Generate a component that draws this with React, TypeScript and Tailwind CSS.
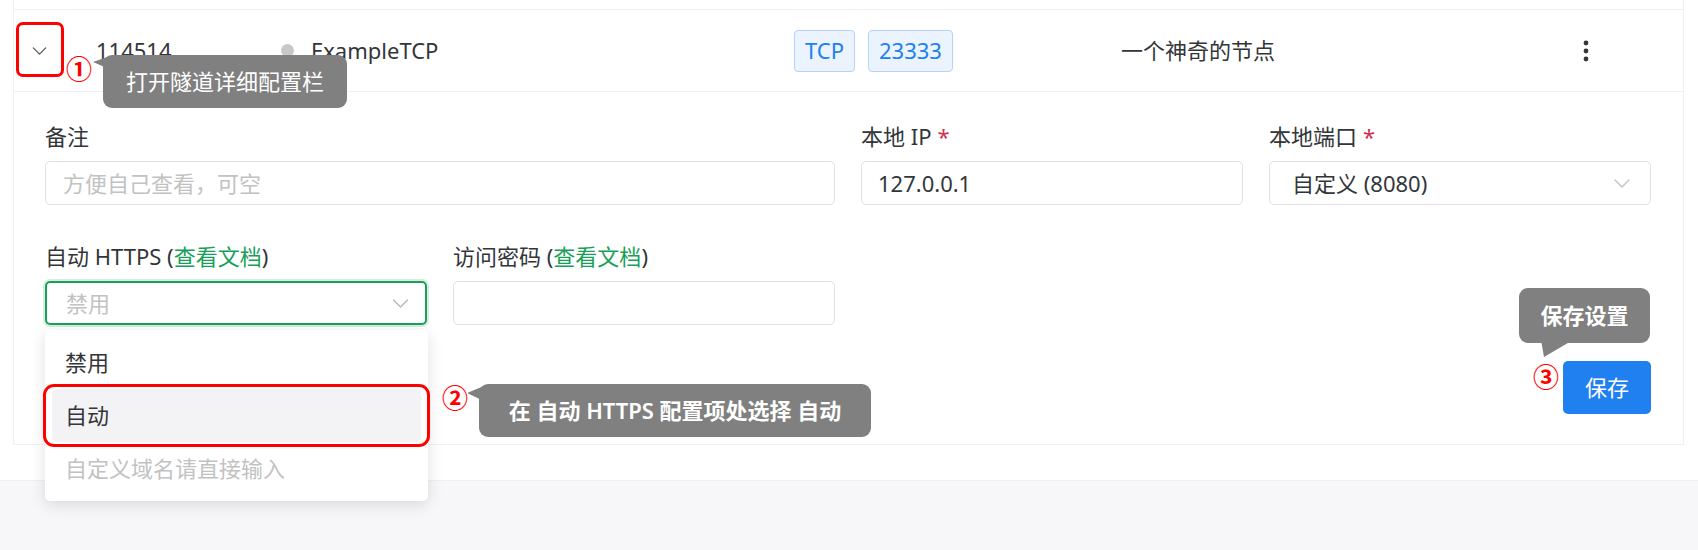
import React from "react";

const Chevron = ({ className = "" }: { className?: string }) => (
  <svg
    viewBox="0 0 16 9"
    className={className}
    fill="none"
    stroke="currentColor"
    strokeWidth={1.4}
    strokeLinecap="round"
    strokeLinejoin="round"
  >
    <path d="M1 1l7 7 7-7" />
  </svg>
);

const Label = ({ children }: { children: React.ReactNode }) => (
  <div className="h-[30px] leading-[30px] mb-[10px] text-[22px] text-[#333639] whitespace-nowrap">{children}</div>
);

const Star = () => <span className="ml-[6px] text-[#d03050]">*</span>;

const Doc = () => (
  <span>
    {" "}(<span className="text-[#18a058]">查看文档</span>)
  </span>
);

const Tag = ({ children }: { children: React.ReactNode }) => (
  <span className="h-[42px] px-[10px] flex items-center rounded-[4px] border border-[#b5d3f9] bg-[#eaf3fe] text-[#2080f0] text-[22px]">
    {children}
  </span>
);

export default function App() {
  return (
    <div className="relative w-[1698px] h-[550px] overflow-hidden bg-white font-['Noto_Sans','Noto_Sans_CJK_SC',sans-serif] text-[#333639]">
      {/* card */}
      <div className="ml-[13px] w-[1671px] border-x border-b border-[#efeff5]">
        <div className="h-[10px] border-b border-[#efeff5]" />

        {/* tunnel row */}
        <div className="h-[82px] flex items-center border-b border-[#efeff5] text-[22px]">
          <div className="w-[82px] flex">
            <button className="w-[50px] h-[50px] flex items-center justify-center text-[#555]">
              <Chevron className="w-[15px] h-[8px]" />
            </button>
          </div>
          <div className="w-[185px]">114514</div>
          <div className="w-[513px] flex items-center">
            <span className="w-[13px] h-[13px] rounded-full bg-[#c8c8c8]" />
            <span className="ml-[17px]">ExampleTCP</span>
          </div>
          <div className="w-[327px] flex items-center gap-[13px]">
            <Tag>TCP</Tag>
            <Tag>23333</Tag>
          </div>
          <div className="w-[455px]">一个神奇的节点</div>
          <div className="w-[20px] flex justify-center">
            <svg viewBox="0 0 6 22" className="w-[6px] h-[22px] fill-[#333639]">
              <circle cx="3" cy="3" r="2.4" />
              <circle cx="3" cy="11" r="2.4" />
              <circle cx="3" cy="19" r="2.4" />
            </svg>
          </div>
        </div>

        {/* detail panel */}
        <div className="pt-[29px] pb-[30px] pl-[31px] pr-[32px]">
          <div className="grid grid-cols-4 gap-x-[26px] gap-y-[36px]">
            <div className="col-span-2">
              <Label>备注</Label>
              <div className="h-[44px] rounded-[5px] border border-[#e0e0e6] px-[17px] flex items-center text-[22px] text-[#c2c2c2]">
                方便自己查看，可空
              </div>
            </div>
            <div>
              <Label>
                本地 IP<Star />
              </Label>
              <div className="h-[44px] rounded-[5px] border border-[#e0e0e6] px-[16px] flex items-center text-[22px]">
                127.0.0.1
              </div>
            </div>
            <div>
              <Label>
                本地端口<Star />
              </Label>
              <div className="h-[44px] rounded-[5px] border border-[#e0e0e6] pl-[22px] pr-[20px] flex items-center justify-between text-[22px]">
                <span>自定义 (8080)</span>
                <Chevron className="w-[16px] h-[9px] text-[#c2c2c2]" />
              </div>
            </div>

            <div>
              <Label>
                自动 HTTPS
                <Doc />
              </Label>
              <div className="h-[44px] rounded-[5px] border-2 border-[#18a058] shadow-[0_0_0_2px_rgba(24,160,88,0.18)] pl-[19px] pr-[16px] flex items-center justify-between text-[22px] text-[#c2c2c2]">
                <span>禁用</span>
                <Chevron className="w-[17px] h-[9px] text-[#b8b8b8]" />
              </div>
            </div>
            <div>
              <Label>
                访问密码
                <Doc />
              </Label>
              <div className="h-[44px] rounded-[5px] border border-[#e0e0e6]" />
            </div>
          </div>

          <div className="mt-[36px] flex justify-end">
            <button className="w-[88px] h-[53px] rounded-[5px] bg-[#2080f0] text-white text-[22px]">保存</button>
          </div>
        </div>
      </div>

      {/* page footer area */}
      <div className="mt-[35px] h-[70px] border-t border-[#efeff5] bg-[#f7f7fa]" />

      {/* select dropdown */}
      <div className="absolute left-[45px] top-[330px] w-[383px] py-[6px] rounded-[5px] bg-white shadow-[0_4px_16px_rgba(0,0,0,0.12)] text-[22px]">
        <div className="h-[53px] px-[20px] flex items-center">禁用</div>
        <div className="h-[53px] mx-[7px] px-[13px] flex items-center rounded-[5px] bg-[#f3f3f5]">自动</div>
        <div className="h-[53px] px-[20px] flex items-center text-[#c2c2c2]">自定义域名请直接输入</div>
      </div>

      {/* annotations */}
      <div className="absolute left-[16px] top-[22px] w-[48px] h-[55px] rounded-[7px] border-[3px] border-[#ff0000]" />
      <div className="absolute left-[43px] top-[384px] w-[387px] h-[63px] rounded-[11px] border-[3px] border-[#ff0000]" />

      <svg className="absolute left-0 top-0 w-[1698px] h-[550px] pointer-events-none" viewBox="0 0 1698 550">
        <polygon points="93,62 110,56 116,72" fill="#808080" />
        <polygon points="467,393 484,386 490,404" fill="#808080" />
        <polygon points="1541,340 1573,340 1544,357" fill="#808080" />
      </svg>

      <div className="absolute left-[103px] top-[55px] w-[244px] h-[53px] rounded-[9px] bg-[#808080] text-white text-[22px] flex items-center justify-center">
        打开隧道详细配置栏
      </div>
      <div className="absolute left-[479px] top-[384px] w-[392px] h-[53px] rounded-[9px] bg-[#808080] text-white text-[22px] font-semibold flex items-center justify-center">
        在 自动 HTTPS 配置项处选择 自动
      </div>
      <div className="absolute left-[1519px] top-[288px] w-[131px] h-[55px] rounded-[9px] bg-[#808080] text-white text-[22px] font-semibold flex items-center justify-center">
        保存设置
      </div>

      <span className="absolute left-[66px] top-[53px] text-[26px] leading-[30px] font-bold text-[#ff0000] font-['Noto_Sans_CJK_SC',sans-serif]">①</span>
      <span className="absolute left-[442px] top-[382px] text-[26px] leading-[30px] font-bold text-[#ff0000] bg-white font-['Noto_Sans_CJK_SC',sans-serif]">②</span>
      <span className="absolute left-[1533px] top-[361px] text-[26px] leading-[30px] font-bold text-[#ff0000] font-['Noto_Sans_CJK_SC',sans-serif]">③</span>
    </div>
  );
}
